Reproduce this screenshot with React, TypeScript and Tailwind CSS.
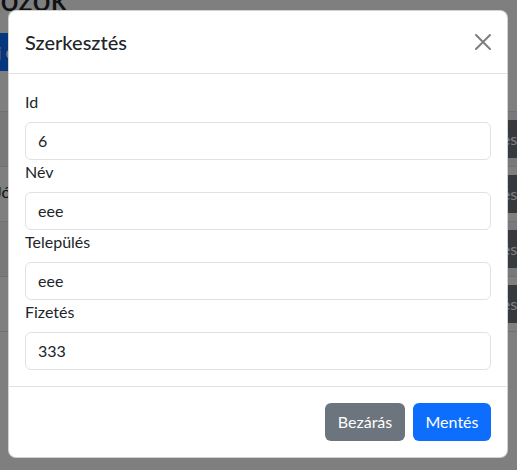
import React from "react";

const rows = [
  { name: "", striped: true },
  { name: "Jób", striped: false },
  { name: "", striped: true },
  { name: "", striped: false },
];

function CloseIcon() {
  return (
    <svg viewBox="0 0 16 16" className="h-4 w-4 fill-black opacity-50">
      <path d="M.293.293a1 1 0 0 1 1.414 0L8 6.586 14.293.293a1 1 0 1 1 1.414 1.414L9.414 8l6.293 6.293a1 1 0 0 1-1.414 1.414L8 9.414l-6.293 6.293a1 1 0 0 1-1.414-1.414L6.586 8 .293 1.707a1 1 0 0 1 0-1.414z" />
    </svg>
  );
}

function Field({ label, value }: { label: string; value: string }) {
  return (
    <div>
      <label className="mb-2 block leading-6">{label}</label>
      <div className="flex h-[38px] w-full items-center rounded-md border border-[#dee2e6] px-3 leading-6">
        {value}
      </div>
    </div>
  );
}

export default function App() {
  return (
    <div className="relative h-[470px] w-[517px] overflow-hidden bg-white font-['Lato',sans-serif] text-base text-[#212529]">
      {/* page behind the backdrop */}
      <div className="-ml-[66px] -mt-[20px] w-[660px]">
        <h2 className="text-[32px] font-medium leading-[38px]">Dolgozók</h2>
        <button className="ml-[40px] mt-[15px] h-[38px] rounded-md bg-[#0d6efd] px-3 text-white">
          Új dolgozó hozzáadása
        </button>
        <div className="h-[41px] border-b border-[#dee2e6]" />
        {rows.map((r, i) => (
          <div
            key={i}
            className={`flex h-[55px] items-start border-b border-[#dee2e6] py-2 ${r.striped ? "bg-black/5" : ""}`}
          >
            <div className="w-[490px] pl-[61px] pt-[5px] leading-6">{r.name}</div>
            <button className="h-[38px] rounded-md bg-[#6c757d] px-3 text-white">Szerkesztés</button>
          </div>
        ))}
      </div>

      {/* backdrop */}
      <div className="absolute inset-0 bg-black/50" />

      {/* modal */}
      <div className="absolute inset-0 px-2 pt-[10px]">
        <div className="w-[500px] rounded-lg border border-black/[0.175] bg-white">
          <div className="flex items-center justify-between border-b border-[#dee2e6] p-4">
            <h5 className="text-[20px] font-medium leading-[30px]">Szerkesztés</h5>
            <CloseIcon />
          </div>
          <div className="p-4">
            <Field label="Id" value="6" />
            <Field label="Név" value="eee" />
            <Field label="Település" value="eee" />
            <Field label="Fizetés" value="333" />
          </div>
          <div className="flex justify-end gap-2 border-t border-[#dee2e6] p-4">
            <button className="h-[38px] w-[80px] rounded-md bg-[#6c757d] text-white">Bezárás</button>
            <button className="h-[38px] w-[78px] rounded-md bg-[#0d6efd] text-white">Mentés</button>
          </div>
        </div>
      </div>
    </div>
  );
}
